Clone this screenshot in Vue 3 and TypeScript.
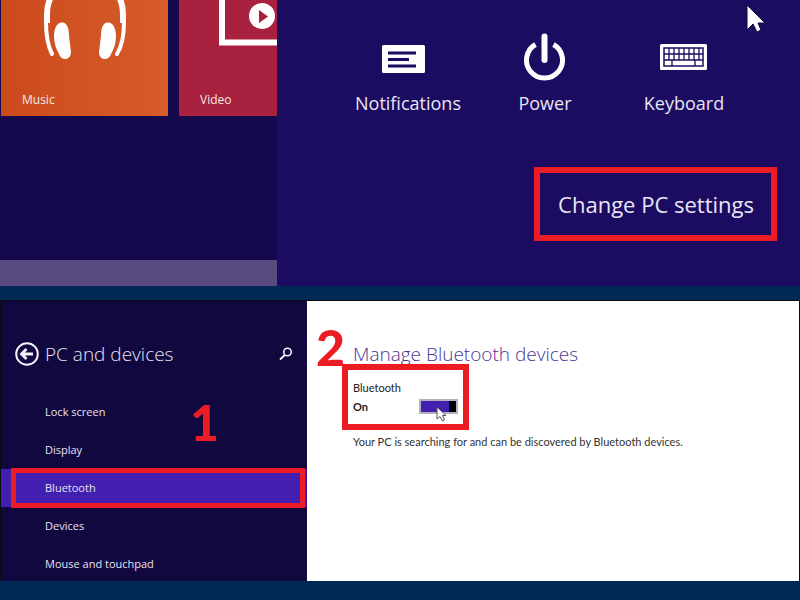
<script setup lang="ts">
import { ref } from 'vue'

const categories: string[] = ['Lock screen', 'Display', 'Bluetooth', 'Devices', 'Mouse and touchpad']
const selected = ref('Bluetooth')
const bluetoothOn = ref(true)
const keyColumns: number[] = [0, 1, 2, 3, 4, 5, 6]
</script>

<template>
  <div class="page">
    <section class="desktop">
      <div class="start">
        <div class="tiles">
          <a class="tile music" href="#music">
            <svg class="headphones" width="86" height="60" viewBox="0 0 86 60" aria-hidden="true">
              <path d="M5 23V15C5-8 19-19 43-19S81-8 81 15V23" fill="none" stroke="#fff" stroke-width="6" />
              <path d="M4 22C4 35 6 46 10 54M82 22C82 35 80 46 75 54" fill="none" stroke="#fff" stroke-width="4" stroke-linecap="round" />
              <path d="M12 36C12 27 16 22 20 22.500C25 22.500 27 28 27 36L29 52C29 61 19 61 17 54C14 49 12 43 12 36Z" fill="#fff" />
              <path d="M74 36C74 27 70 22 66 22.500C61 22.500 59 28 59 36L57 52C57 61 67 61 69 54C72 49 74 43 74 36Z" fill="#fff" />
            </svg>
            <span>Music</span>
          </a>
          <a class="tile video" href="#video">
            <svg class="player" width="59" height="46" viewBox="0 0 59 46" aria-hidden="true">
              <path d="M3 0V42.500H59" fill="none" stroke="#fff" stroke-width="6" />
              <circle cx="43" cy="16" r="13" fill="#fff" />
              <path d="M40 10V23L49 16.500Z" fill="#a8203c" />
            </svg>
            <span>Video</span>
          </a>
        </div>
        <div class="taskbar"></div>
      </div>

      <div class="charm">
        <div class="quick">
          <button type="button" class="action">
            <svg width="52" height="48" viewBox="0 0 52 48" aria-hidden="true">
              <rect x="0" y="12" width="43" height="28" rx="1.500" fill="#fff" />
              <path d="M6 20H34M6 26.500H27M6 33H34" stroke="#1b0c61" stroke-width="3" />
            </svg>
            <span>Notifications</span>
          </button>
          <button type="button" class="action">
            <svg width="44" height="48" viewBox="0 0 44 48" aria-hidden="true">
              <path d="M12.500 11.500A18 18 0 1 0 30.500 11.500" fill="none" stroke="#fff" stroke-width="5" />
              <path d="M21.500 3.500V27" stroke="#fff" stroke-width="6" stroke-linecap="round" />
            </svg>
            <span>Power</span>
          </button>
          <button type="button" class="action">
            <svg width="48" height="48" viewBox="0 0 48 48" aria-hidden="true">
              <rect x="0" y="11" width="47" height="26" rx="1.500" fill="#fff" />
              <path d="M4 15H43V33H4Z" fill="none" stroke="#1b0c61" stroke-width="1.500" />
              <path d="M4 21H43M4 27H43M12 27V33M35 27V33" stroke="#1b0c61" stroke-width="1.300" />
              <path v-for="c in keyColumns" :key="c" :d="`M${9 + c * 5} 15V27`" stroke="#1b0c61" stroke-width="1.300" />
            </svg>
            <span>Keyboard</span>
          </button>
        </div>
        <button type="button" class="change">Change PC settings</button>
        <svg class="pointer" width="20" height="30" viewBox="0 0 20 30" aria-hidden="true">
          <path d="M1 1V26L7 20L11 28L15 26L12 19H19Z" fill="#fff" stroke="#100640" stroke-width="1" />
        </svg>
      </div>
    </section>

    <section class="settings">
      <aside class="sidebar">
        <header class="heading">
          <button type="button" class="icon-button" aria-label="Back">
            <svg width="24" height="24" viewBox="0 0 24 24" fill="none" stroke="#f3f0fa" aria-hidden="true">
              <circle cx="12" cy="12" r="10.800" stroke-width="2" />
              <path d="M18 12H7M11.500 7L6.500 12L11.500 17" stroke-width="2.800" />
            </svg>
          </button>
          <h1>PC and devices</h1>
          <button type="button" class="icon-button" aria-label="Search">
            <svg width="14" height="14" viewBox="0 0 14 14" fill="none" stroke="#f3f0fa" aria-hidden="true">
              <circle cx="8.500" cy="5" r="3.800" stroke-width="1.600" />
              <path d="M5.800 8L1 12.500" stroke-width="2" />
            </svg>
          </button>
        </header>
        <nav>
          <a
            v-for="item in categories"
            :key="item"
            href="#settings"
            class="category"
            :class="{ selected: item === selected }"
            @click.prevent="selected = item"
          >{{ item }}</a>
        </nav>
        <span class="step one">1</span>
      </aside>

      <main class="content">
        <h2>Manage Bluetooth devices</h2>
        <div class="toggle-box">
          <label for="bluetooth">Bluetooth</label>
          <div class="toggle-row">
            <strong>{{ bluetoothOn ? 'On' : 'Off' }}</strong>
            <input id="bluetooth" v-model="bluetoothOn" type="checkbox" role="switch" />
          </div>
          <svg class="pointer-small" width="11" height="16" viewBox="0 0 11 16" aria-hidden="true">
            <path d="M1 1V13L4 10.500L6.500 15L8.500 14L6.500 9.500H10Z" fill="#fff" stroke="#555" stroke-width="1" />
          </svg>
        </div>
        <p>Your PC is searching for and can be discovered by Bluetooth devices.</p>
        <span class="step two">2</span>
      </main>
    </section>
  </div>
</template>

<style>
body {
  margin: 0;
  background: #022855;
}
</style>

<style scoped>
.page {
  min-height: 100vh;
  box-sizing: border-box;
  padding-bottom: 19px;
  display: flex;
  flex-direction: column;
  gap: 14px;
  background: #022855;
  font-family: "Open Sans", "Noto Sans", sans-serif;
  overflow: hidden;
}

button {
  font-family: inherit;
  cursor: pointer;
}

a {
  text-decoration: none;
}

.desktop {
  display: grid;
  grid-template-columns: 277px 1fr;
  min-height: 286px;
}

.start {
  display: flex;
  flex-direction: column;
  justify-content: space-between;
  background: #15084d;
  overflow: hidden;
}

.tiles {
  display: grid;
  grid-template-columns: 167px 1fr;
  gap: 11px;
  padding-left: 1px;
}

.tile {
  height: 116px;
  box-sizing: border-box;
  display: flex;
  flex-direction: column;
  justify-content: space-between;
  padding: 0 0 7px 21px;
  color: #f4e9e6;
  font-size: 12px;
  font-weight: 500;
  line-height: 18px;
}

.music {
  background: linear-gradient(90deg, #cc4a1d, #d65c29);
}

.video {
  background: #a8213e;
}

.headphones {
  margin-left: 20px;
}

.player {
  margin-left: 19px;
}

.taskbar {
  height: 26px;
  background: #594a7f;
}

.charm {
  position: relative;
  display: flex;
  flex-direction: column;
  align-items: flex-end;
  background: #1b0c61;
}

.quick {
  align-self: stretch;
  display: grid;
  grid-template-columns: 140px 134px 144px;
  justify-content: end;
  padding: 33px 44px 0 0;
}

.action {
  display: flex;
  flex-direction: column;
  align-items: center;
  gap: 10px;
  padding: 0;
  border: 0;
  background: none;
  color: #e9e5f3;
  font-size: 18px;
  line-height: 24px;
}

.change {
  margin: 52px 23px 0 0;
  padding: 15px 17px 15px 18px;
  border: 6px solid #ec1c24;
  background: none;
  color: #e9e5f3;
  font-size: 22px;
  line-height: 32px;
  white-space: nowrap;
}

.pointer {
  position: absolute;
  top: 4px;
  right: 34px;
}

.settings {
  flex: 1;
  display: grid;
  grid-template-columns: 306px 1fr;
  border: 1px solid #0a0a12;
  border-bottom: 0;
  min-height: 280px;
  box-sizing: border-box;
}

.sidebar {
  position: relative;
  height: 280px;
  overflow: hidden;
  background: #110840;
}

.heading {
  display: flex;
  align-items: center;
  gap: 6px;
  padding: 38px 14px 24px 14px;
}

h1,
h2 {
  margin: 0;
  font-size: 19px;
  font-weight: 300;
  line-height: 30px;
}

.heading h1 {
  flex: 1;
  color: #e6e2f0;
}

.icon-button {
  display: flex;
  padding: 0;
  border: 0;
  background: none;
}

.category {
  display: block;
  position: relative;
  padding-left: 44px;
  color: #e6e2f0;
  font-size: 11px;
  line-height: 38px;
}

.selected {
  background: #421faf;
}

.selected::after {
  content: "";
  position: absolute;
  inset: -1px 2px -1px 10px;
  border: 5px solid #ec1c24;
}

.step {
  position: absolute;
  color: #ec1c24;
  font-family: Lato, sans-serif;
  font-size: 50px;
  font-weight: 900;
  line-height: 60px;
}

.one {
  top: 91px;
  left: 189px;
}

.two {
  top: 16px;
  left: 9px;
}

.content {
  position: relative;
  padding: 38px 24px 0 46px;
  background: #fff;
}

.content h2 {
  color: #4a3596;
}

.toggle-box {
  position: relative;
  width: 127px;
  box-sizing: border-box;
  margin: -5px 0 0 -11px;
  padding: 8px 5px 8px 5px;
  border: 6px solid #ec1c24;
  color: #222;
  font-family: Lato, sans-serif;
  font-size: 11px;
  line-height: 19px;
}

.toggle-box label {
  display: block;
}

.toggle-row {
  display: flex;
  align-items: center;
  justify-content: space-between;
}

input {
  appearance: none;
  width: 39px;
  height: 15px;
  margin: 0;
  border: 0;
  background: linear-gradient(90deg, transparent 30px, #000 30px), #421faf;
  box-shadow: inset 0 0 0 2px #b4b0bd;
}

input:not(:checked) {
  background: #a6a6a6;
}

.pointer-small {
  position: absolute;
  right: 16px;
  bottom: 2px;
}

.content p {
  margin: 2px 0 0;
  color: #333;
  font-family: Lato, sans-serif;
  font-size: 11px;
  line-height: 20px;
}
</style>
